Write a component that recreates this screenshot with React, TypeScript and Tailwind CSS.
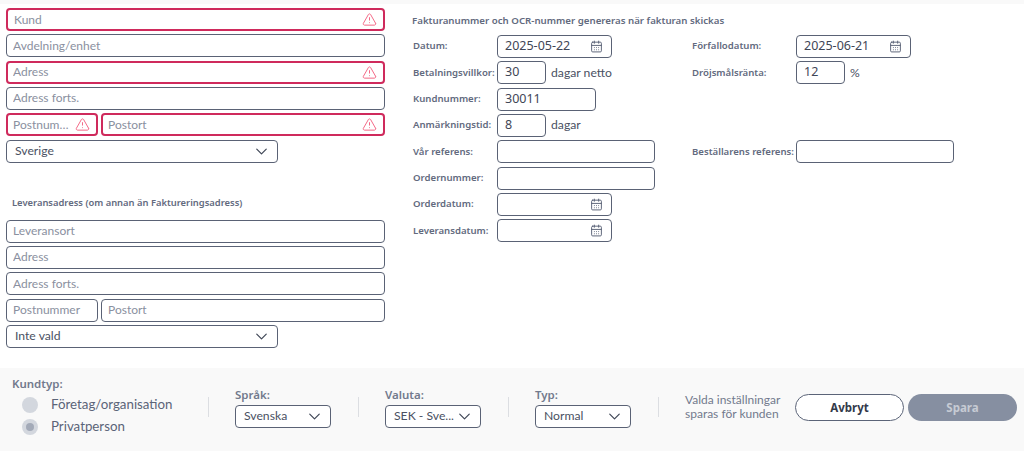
import React from 'react';
import { CalendarDays, ChevronDown, TriangleAlert } from 'lucide-react';

const BASE_INPUT = 'h-[23px] rounded-[4px] bg-white flex items-center min-w-0';
const PLAIN_BORDER = 'border border-[#5a6275]';
const NUNITO_LIKE = "font-['Lato',sans-serif]";

function Field({ placeholder, error, className = '', indent = false }: { placeholder: string; error?: boolean; className?: string; indent?: boolean }) {
  return (
    <div className={`${BASE_INPUT} ${error ? 'border-2 border-[#cf2a5c]' : PLAIN_BORDER} ${className}`}>
      <input
        placeholder={placeholder}
        aria-label={placeholder}
        className={`flex-1 min-w-0 bg-transparent outline-none text-ellipsis text-[12px] text-[#5b6478] placeholder:text-[#8a90a0] ${NUNITO_LIKE} ${indent ? 'pl-[6px] placeholder:text-[#5f6679]' : error ? 'pl-[5px]' : 'pl-[6px]'} ${error ? 'pr-[4px]' : ''}`}
      />
      {error && <TriangleAlert size={15} strokeWidth={1.5} className="mr-[6px] ml-[2px] shrink-0 text-[#f2607f]" />}
    </div>
  );
}

function Select({ value, className = '' }: { value: string; className?: string }) {
  return (
    <div className={`${BASE_INPUT} ${PLAIN_BORDER} justify-between pl-[8px] pr-[6px] ${className}`}>
      <span className={`whitespace-nowrap text-[12.2px] text-[#4a5163] ${NUNITO_LIKE}`}>{value}</span>
      <ChevronDown size={19} strokeWidth={1.5} className="shrink-0 text-[#3f4656]" />
    </div>
  );
}

function DateBox({ value }: { value?: string }) {
  return (
    <div className={`${BASE_INPUT} ${PLAIN_BORDER} w-[115px] justify-between pl-[7px] pr-[8px]`}>
      <span className="text-[12.5px] text-[#3f4656]">{value}</span>
      <CalendarDays size={13} strokeWidth={1.8} className="text-[#5b6478]" />
    </div>
  );
}

function Box({ value, width }: { value?: string; width: string }) {
  return (
    <div className={`${BASE_INPUT} ${PLAIN_BORDER} pl-[7px] text-[12.5px] text-[#3f4656] ${width}`}>{value}</div>
  );
}

function Row({ label, labelWidth = 'w-[84px]', children }: { label: string; labelWidth?: string; children?: React.ReactNode }) {
  return (
    <div className="flex items-center h-[23px]">
      <span className={`${labelWidth} shrink-0 whitespace-nowrap text-[9.6px] font-semibold text-[#626a7e]`}>{label}</span>
      {children}
    </div>
  );
}

function Divider() {
  return <div className="w-px h-[20px] bg-[#dcdee2] mt-[11px]" />;
}

function FooterSelect({ label, value }: { label: string; value: string }) {
  return (
    <div className="flex flex-col w-[96px]">
      <span className="h-[19px] text-[11.5px] font-semibold text-[#727a8d] leading-[17px]">{label}</span>
      <Select value={value} className="w-[96px]" />
    </div>
  );
}

export default function App() {
  return (
    <div className="w-[1024px] h-[451px] flex flex-col bg-white overflow-hidden font-['Noto_Sans',sans-serif]">
      <div className="h-[4px] bg-[#f9f9f9]" />

      <div className="flex-1 flex pt-[4px]">
        {/* Billing and delivery address */}
        <div className="w-[413px] shrink-0 pl-[6px]">
          <div className="w-[379px] flex flex-col gap-[3.33px]">
            <Field placeholder="Kund" error indent />
            <Field placeholder="Avdelning/enhet" />
            <Field placeholder="Adress" error />
            <Field placeholder="Adress forts." />
            <div className="flex gap-[3px]">
              <Field placeholder="Postnummer" error className="w-[92px]" />
              <Field placeholder="Postort" error className="flex-1" />
            </div>
            <Select value="Sverige" className="w-[272px]" />
          </div>

          <h2 className="mt-[34px] ml-[6px] h-[23px] text-[9.4px] font-semibold text-[#626a7e] leading-[12px]">
            Leveransadress (om annan än Faktureringsadress)
          </h2>

          <div className="w-[379px] flex flex-col gap-[3.33px]">
            <Field placeholder="Leveransort" />
            <Field placeholder="Adress" />
            <Field placeholder="Adress forts." />
            <div className="flex gap-[3px]">
              <Field placeholder="Postnummer" className="w-[92px]" />
              <Field placeholder="Postort" className="flex-1" />
            </div>
            <Select value="Inte vald" className="w-[272px]" />
          </div>
        </div>

        {/* Invoice details */}
        <div className="flex-1">
          <p className="-ml-[1px] h-[27px] pt-[6px] text-[9.7px] font-semibold text-[#626a7e] leading-[14px] whitespace-nowrap">
            Fakturanummer och OCR-nummer genereras när fakturan skickas
          </p>
          <div className="grid grid-cols-[279px_1fr] gap-y-[3.33px]">
            <Row label="Datum:"><DateBox value="2025-05-22" /></Row>
            <Row label="Förfallodatum:" labelWidth="w-[104px]"><DateBox value="2025-06-21" /></Row>

            <Row label="Betalningsvillkor:">
              <Box value="30" width="w-[49px]" />
              <span className={`ml-[5px] text-[12.2px] text-[#4a5163] ${NUNITO_LIKE}`}>dagar netto</span>
            </Row>
            <Row label="Dröjsmålsränta:" labelWidth="w-[104px]">
              <Box value="12" width="w-[49px]" />
              <span className={`ml-[5px] text-[12.2px] text-[#4a5163] ${NUNITO_LIKE}`}>%</span>
            </Row>

            <Row label="Kundnummer:"><Box value="30011" width="w-[99px]" /></Row>
            <div />

            <Row label="Anmärkningstid:">
              <Box value="8" width="w-[49px]" />
              <span className={`ml-[5px] text-[12.2px] text-[#4a5163] ${NUNITO_LIKE}`}>dagar</span>
            </Row>
            <div />

            <Row label="Vår referens:"><Box width="w-[158px]" /></Row>
            <Row label="Beställarens referens:" labelWidth="w-[104px]"><Box width="w-[158px]" /></Row>

            <Row label="Ordernummer:"><Box width="w-[158px]" /></Row>
            <div />

            <Row label="Orderdatum:"><DateBox /></Row>
            <div />

            <Row label="Leveransdatum:"><DateBox /></Row>
            <div />
          </div>
        </div>
      </div>

      {/* Customer settings footer */}
      <div className="h-[83px] shrink-0 bg-[#f9f9f9] flex items-start">
        <div className="w-[207.5px] shrink-0 pl-[12px] pt-[9px]">
          <div className="h-[19px] text-[11.5px] font-semibold text-[#727a8d] leading-[14px]">Kundtyp:</div>
          <div className={`flex flex-col gap-[5px] pl-[10px] ${NUNITO_LIKE}`}>
            <label className="flex items-center gap-[13px] h-[17px] text-[13.3px] text-[#5b6478]">
              <span className="w-[16px] h-[16px] rounded-full bg-[#d3d7de]" />
              Företag/organisation
            </label>
            <label className="flex items-center gap-[13px] h-[17px] text-[13.3px] text-[#5b6478]">
              <span className="w-[16px] h-[16px] rounded-full bg-[#d3d7de] flex items-center justify-center">
                <span className="w-[8px] h-[8px] rounded-full bg-[#a3aab8]" />
              </span>
              Privatperson
            </label>
          </div>
        </div>

        <div className="flex items-start gap-[26.5px] pt-[18px]">
          <Divider />
          <FooterSelect label="Språk:" value="Svenska" />
          <Divider />
          <FooterSelect label="Valuta:" value="SEK - Sve..." />
          <Divider />
          <FooterSelect label="Typ:" value="Normal" />
          <Divider />
        </div>

        <div className={`ml-[26.5px] pt-[25px] w-[110px] text-[12px] leading-[14px] text-[#727a8d] ${NUNITO_LIKE}`}>
          Valda inställningar sparas för kunden
        </div>

        <div className="flex gap-[4px] pt-[26px]">
          <button className="w-[109px] h-[27px] rounded-full border border-[#5b6478] bg-white text-[11.5px] font-bold text-[#333a4a]">Avbryt</button>
          <button className="w-[109px] h-[27px] rounded-full bg-[#868fa1] text-[11.5px] font-bold text-[#c6cbd4]">Spara</button>
        </div>
      </div>
    </div>
  );
}
